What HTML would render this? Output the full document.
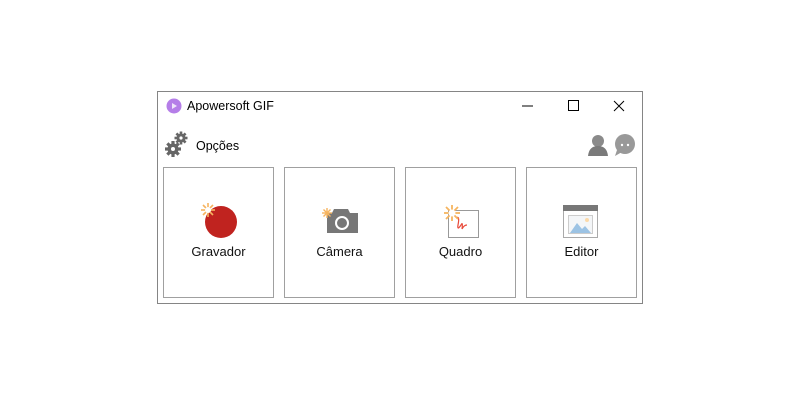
<!DOCTYPE html>
<html><head><style>
body{margin:0;width:800px;height:400px;background:#fff;position:relative;font-family:"Liberation Sans",sans-serif;overflow:hidden}
.win{position:absolute;left:157px;top:91px;width:484px;height:211px;border:1px solid #858585;background:#fff}
.t{position:absolute;font-size:12.5px;color:#000}
.tile{position:absolute;top:167px;width:109px;height:129px;border:1px solid #a0a0a0;background:#fff}
.lbl{position:absolute;top:244px;font-size:13px;color:#111;text-align:center;width:111px}
svg{position:absolute}
</style></head><body>
<div class="win"></div>
<svg style="left:166px;top:98px" width="16" height="16"><circle cx="8" cy="8" r="7.5" fill="#b57ee8"/><path d="M6 5 L11 8 L6 11Z" fill="#fff" opacity=".8"/></svg>
<div class="t" style="left:187px;top:99px">Apowersoft GIF</div>
<svg style="left:520px;top:98px" width="110" height="16"><line x1="2" y1="8" x2="13" y2="8" stroke="#000"/><rect x="48.5" y="2.5" width="10" height="10" fill="none" stroke="#000"/><path d="M94 3 L104 13 M104 3 L94 13" stroke="#000"/></svg>
<svg style="left:165px;top:131px" width="24" height="26">
<g transform="translate(16,7)" fill="#666"><circle r="4.5"/><g><rect x="-1.3" y="-6.5" width="2.6" height="13"/><rect x="-1.3" y="-6.5" width="2.6" height="13" transform="rotate(45)"/><rect x="-1.3" y="-6.5" width="2.6" height="13" transform="rotate(90)"/><rect x="-1.3" y="-6.5" width="2.6" height="13" transform="rotate(135)"/></g><circle r="1.6" fill="#fff"/></g>
<g transform="translate(8,18)" fill="#666"><circle r="5.5"/><rect x="-1.6" y="-8" width="3.2" height="16"/><rect x="-1.6" y="-8" width="3.2" height="16" transform="rotate(45)"/><rect x="-1.6" y="-8" width="3.2" height="16" transform="rotate(90)"/><rect x="-1.6" y="-8" width="3.2" height="16" transform="rotate(135)"/><circle r="2" fill="#fff"/></g>
</svg>
<div class="t" style="left:196px;top:139px">Opções</div>
<svg style="left:587px;top:132px" width="50" height="26"><circle cx="11" cy="9" r="6" fill="#8a8a8a"/><path d="M1 24 Q2 14 11 14 Q20 14 21 24Z" fill="#7a7a7a"/><circle cx="38" cy="12" r="10" fill="#999"/><path d="M30 18 L28 24 L35 20Z" fill="#999"/><circle cx="35" cy="13" r="1.2" fill="#fff"/><circle cx="41" cy="13" r="1.2" fill="#fff"/></svg>
<div class="tile" style="left:163px"></div><div class="tile" style="left:284px"></div><div class="tile" style="left:405px"></div><div class="tile" style="left:526px"></div>
<svg style="left:200px;top:201px" width="40" height="40"><circle cx="21" cy="21" r="16" fill="#c0231f"/><g stroke="#f6b45f" stroke-width="1.6"><line x1="8" y1="2" x2="8" y2="16"/><line x1="1" y1="9" x2="15" y2="9"/><line x1="3" y1="4" x2="13" y2="14"/><line x1="13" y1="4" x2="3" y2="14"/></g><circle cx="8" cy="9" r="3" fill="#fff"/></svg>
<svg style="left:320px;top:205px" width="42" height="32"><path d="M14 4 H28 L30 8 H38 V28 H7 V8 H12Z" fill="#777"/><circle cx="22" cy="18" r="6" fill="none" stroke="#fff" stroke-width="2"/><g stroke="#f6b45f" stroke-width="1.4"><line x1="7" y1="3" x2="7" y2="13"/><line x1="2" y1="8" x2="12" y2="8"/><line x1="3.5" y1="4.5" x2="10.5" y2="11.5"/><line x1="10.5" y1="4.5" x2="3.5" y2="11.5"/></g></svg>
<svg style="left:442px;top:203px" width="42" height="38"><rect x="6.5" y="7.5" width="30" height="27" fill="#fff" stroke="#999"/><path d="M14 15 Q18 12 16 22 Q15 28 19 22 Q21 18 20 26 Q22 22 25 22" fill="none" stroke="#e84a3a" stroke-width="1.2"/><g stroke="#f6b45f" stroke-width="1.8"><line x1="10" y1="2" x2="10" y2="18"/><line x1="2" y1="10" x2="18" y2="10"/><line x1="4" y1="4" x2="16" y2="16"/><line x1="16" y1="4" x2="4" y2="16"/></g><circle cx="10" cy="10" r="3.5" fill="#fff"/></svg>
<svg style="left:562px;top:204px" width="38" height="36"><rect x="1.5" y="1.5" width="34" height="32" fill="#fff" stroke="#aaa"/><rect x="1" y="1" width="35" height="6" fill="#777"/><rect x="6.5" y="11.5" width="24" height="18" fill="#f4f6f8" stroke="#ccc"/><circle cx="25" cy="16" r="2" fill="#fbd9a8"/><path d="M8 29 L15 19 L20 25 L23 22 L29 29Z" fill="#9cc3e4"/></svg>
<div class="lbl" style="left:163px">Gravador</div>
<div class="lbl" style="left:284px">Câmera</div>
<div class="lbl" style="left:405px">Quadro</div>
<div class="lbl" style="left:526px">Editor</div>
</body></html>
